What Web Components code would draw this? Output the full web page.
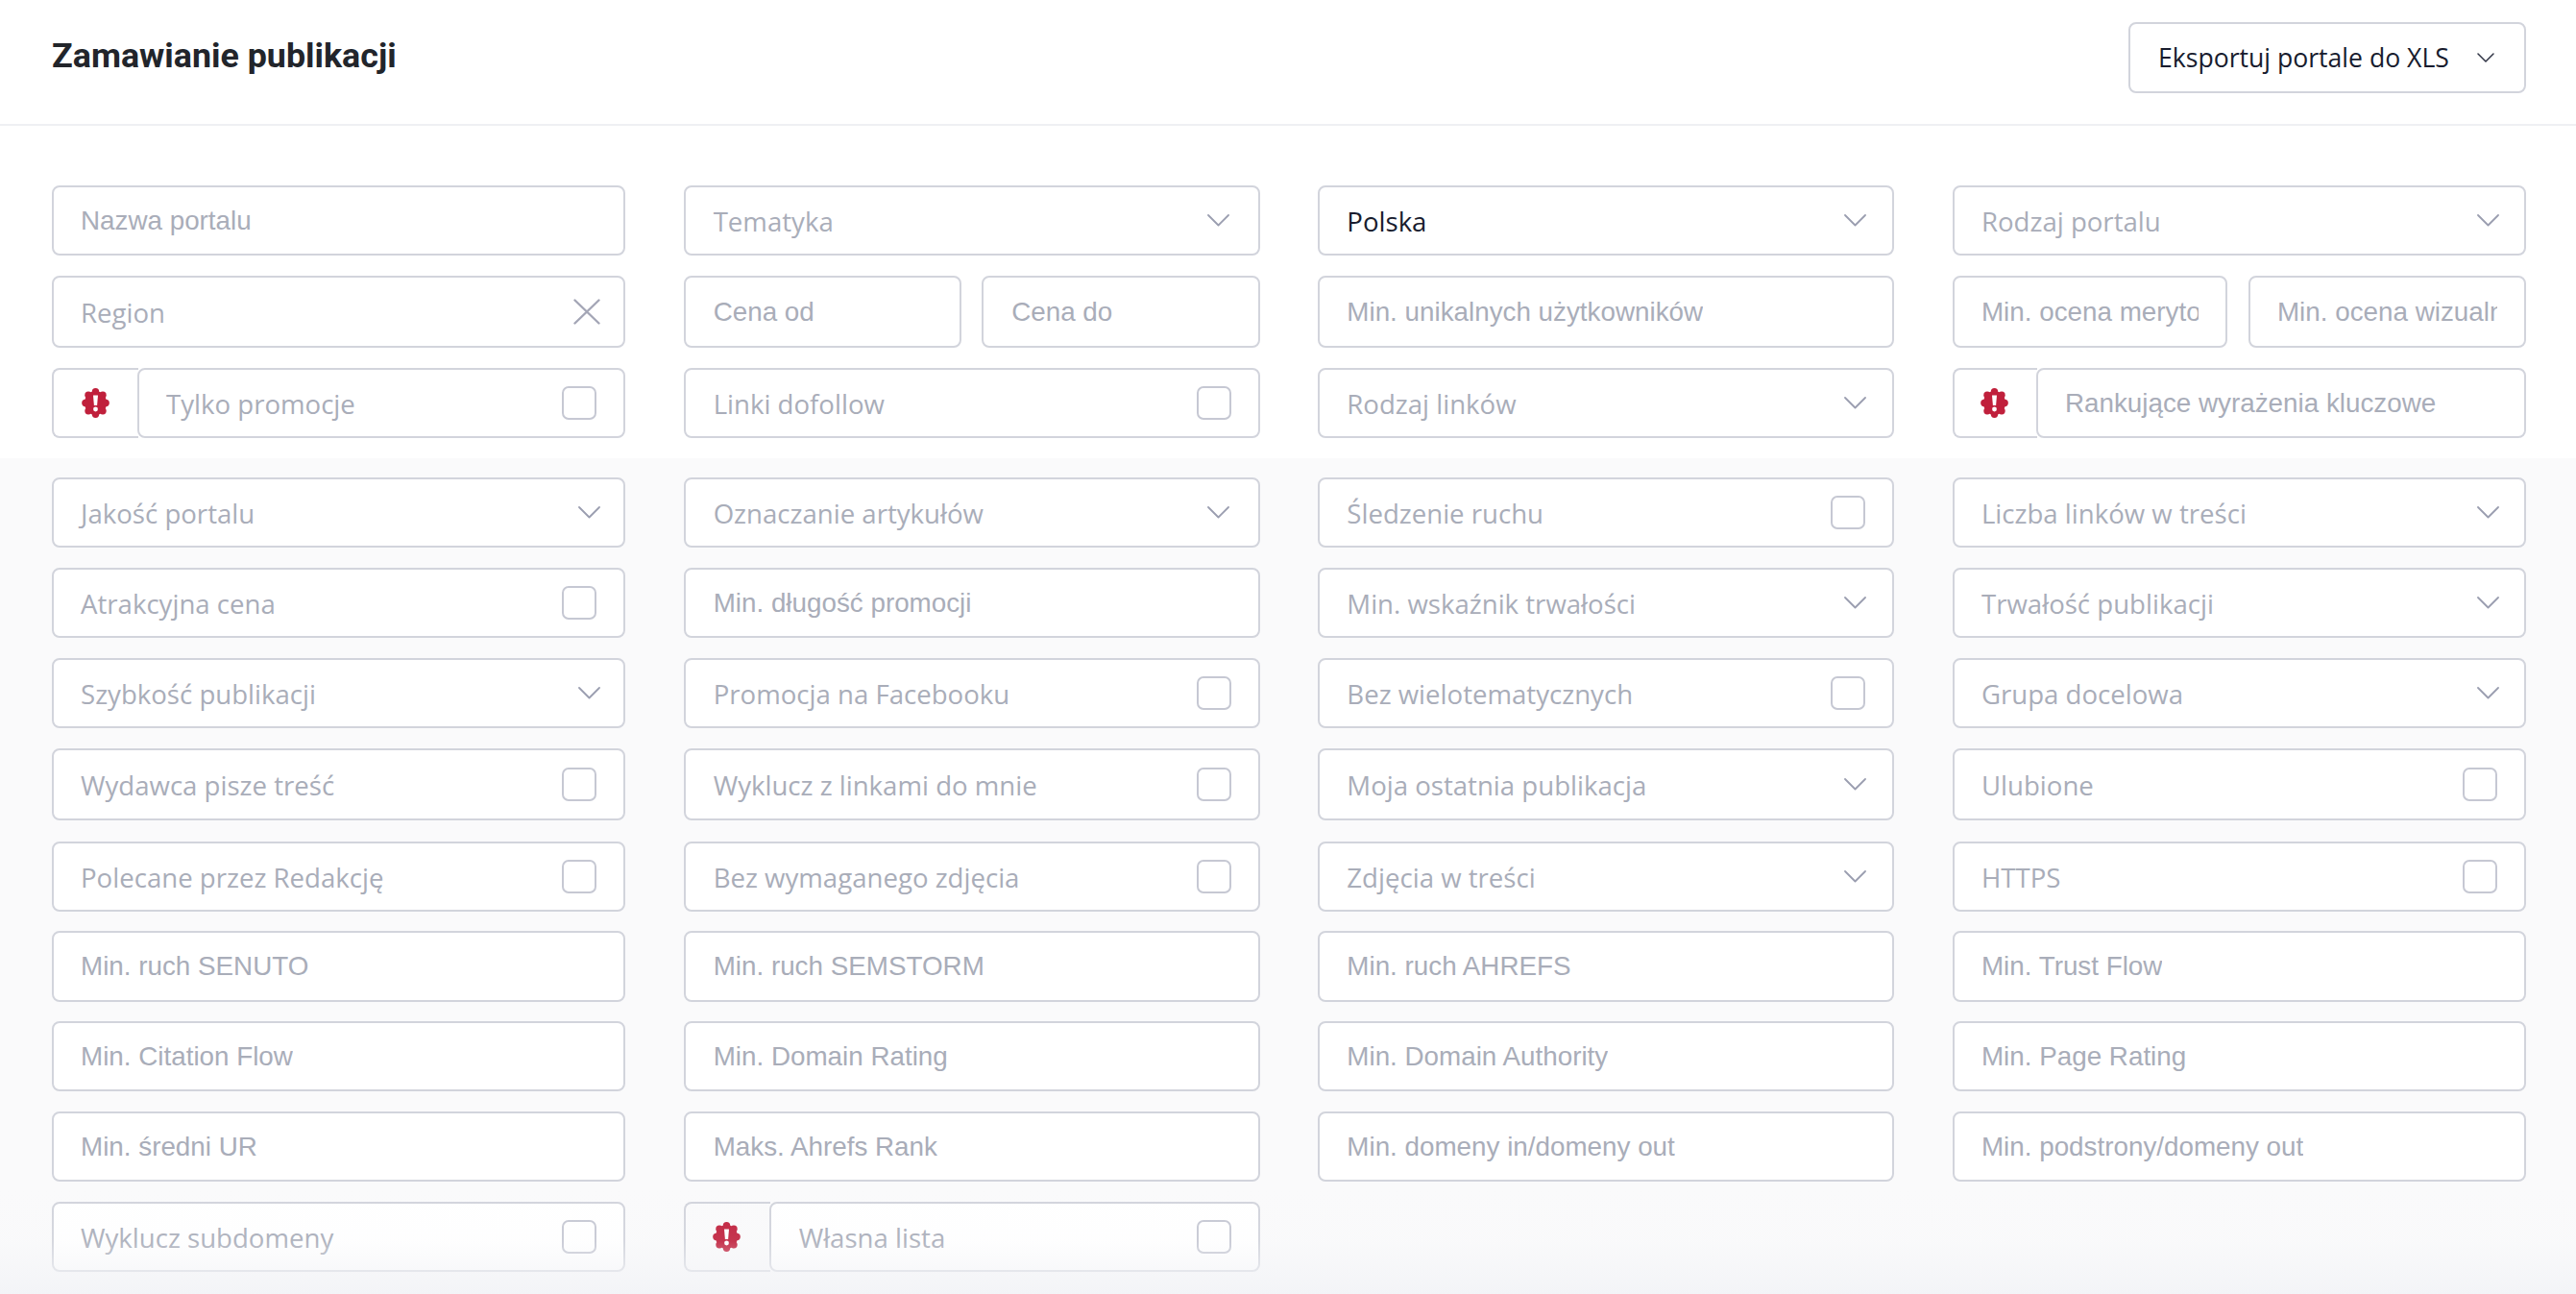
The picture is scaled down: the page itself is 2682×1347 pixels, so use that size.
<!DOCTYPE html>
<html lang="pl"><head><meta charset="utf-8"><title>Zamawianie publikacji</title>
<style>
html,body{margin:0;padding:0;background:#fff}
body{width:2682px;height:1347px;overflow:hidden;font-family:"Open Sans",sans-serif}
</style></head><body>
<order-page>
  <page-header slot="header">
    <span>Zamawianie publikacji</span>
    <export-button slot="action">Eksportuj portale do XLS</export-button>
  </page-header>
  <filter-section>
    <filter-row h="73" gap="21">
      <text-field>Nazwa portalu</text-field>
      <select-field>Tematyka</select-field>
      <select-field value>Polska</select-field>
      <select-field>Rodzaj portalu</select-field>
    </filter-row>
    <filter-row h="75" gap="21">
      <clear-field>Region</clear-field>
      <pair-field><text-field>Cena od</text-field><text-field>Cena do</text-field></pair-field>
      <text-field>Min. unikalnych użytkowników</text-field>
      <pair-field tight><text-field>Min. ocena merytoryczna</text-field><text-field>Min. ocena wizualna</text-field></pair-field>
    </filter-row>
    <filter-row h="73" gap="0">
      <addon-field><check-field>Tylko promocje</check-field></addon-field>
      <check-field>Linki dofollow</check-field>
      <select-field>Rodzaj linków</select-field>
      <addon-field narrow><text-field>Rankujące wyrażenia kluczowe</text-field></addon-field>
    </filter-row>
  </filter-section>
  <filter-section more>
    <filter-row h="73" gap="21">
      <select-field>Jakość portalu</select-field>
      <select-field>Oznaczanie artykułów</select-field>
      <check-field>Śledzenie ruchu</check-field>
      <select-field>Liczba linków w treści</select-field>
    </filter-row>
    <filter-row h="73" gap="21">
      <check-field>Atrakcyjna cena</check-field>
      <text-field>Min. długość promocji</text-field>
      <select-field>Min. wskaźnik trwałości</select-field>
      <select-field>Trwałość publikacji</select-field>
    </filter-row>
    <filter-row h="73" gap="21">
      <select-field>Szybkość publikacji</select-field>
      <check-field>Promocja na Facebooku</check-field>
      <check-field>Bez wielotematycznych</check-field>
      <select-field>Grupa docelowa</select-field>
    </filter-row>
    <filter-row h="75" gap="22">
      <check-field>Wydawca pisze treść</check-field>
      <check-field>Wyklucz z linkami do mnie</check-field>
      <select-field>Moja ostatnia publikacja</select-field>
      <check-field>Ulubione</check-field>
    </filter-row>
    <filter-row h="73" gap="20">
      <check-field>Polecane przez Redakcję</check-field>
      <check-field>Bez wymaganego zdjęcia</check-field>
      <select-field>Zdjęcia w treści</select-field>
      <check-field>HTTPS</check-field>
    </filter-row>
    <filter-row h="74" gap="20">
      <text-field>Min. ruch SENUTO</text-field>
      <text-field>Min. ruch SEMSTORM</text-field>
      <text-field>Min. ruch AHREFS</text-field>
      <text-field>Min. Trust Flow</text-field>
    </filter-row>
    <filter-row h="73" gap="21">
      <text-field>Min. Citation Flow</text-field>
      <text-field>Min. Domain Rating</text-field>
      <text-field>Min. Domain Authority</text-field>
      <text-field>Min. Page Rating</text-field>
    </filter-row>
    <filter-row h="73" gap="21">
      <text-field>Min. średni UR</text-field>
      <text-field>Maks. Ahrefs Rank</text-field>
      <text-field>Min. domeny in/domeny out</text-field>
      <text-field>Min. podstrony/domeny out</text-field>
    </filter-row>
    <filter-row h="73" gap="0">
      <check-field>Wyklucz subdomeny</check-field>
      <addon-field><check-field>Własna lista</check-field></addon-field>
    </filter-row>
  </filter-section>
</order-page>
<script>
const BOX=`:host{display:block;min-width:0;box-sizing:border-box;height:100%;background:#fff;border:2px solid #d2d4dc;border-radius:8px;color:#a9adb9;font-size:27.6px}
.in{display:flex;align-items:center;justify-content:space-between;height:100%;padding:0 28px 0 calc(28px + var(--text-shift,0px));box-sizing:border-box;white-space:nowrap}
.t{display:block;min-width:0;overflow:hidden}
svg{display:block;flex:none}`;
const OS=`font-family:"Open Sans",sans-serif;`;
function def(name,css,html,init){
  customElements.define(name,class extends HTMLElement{
    constructor(){super();const r=this.attachShadow({mode:'open'});r.innerHTML=`<style>${css}</style>${html}`;}
    connectedCallback(){init&&init(this);}
  });
}
const CHEV=`<svg width="23" height="13" viewBox="0 0 23 13" fill="none" stroke="#9b9eb0" stroke-width="1.8" stroke-linecap="round" stroke-linejoin="round"><path d="M1 1l10.5 10.5L22 1"/></svg>`;
def('order-page',`:host{display:block;width:2682px;height:1347px;position:relative;overflow:hidden;background:#fff}
.fade{position:absolute;left:0;right:0;bottom:0;height:110px;pointer-events:none;background:linear-gradient(to bottom,rgba(243,244,247,0),rgba(243,244,247,.1) 50%,rgba(243,244,247,.58) 78%,rgba(243,244,247,1) 100%)}`,
`<slot name="header"></slot><slot></slot><div class="fade"></div>`);
def('page-header',`:host{display:flex;align-items:center;justify-content:space-between;box-sizing:border-box;height:131px;padding:0 52px 14px 54px;border-bottom:2px solid #eff0f3;color:#22252b;font:700 35.8px Roboto,sans-serif}`,
`<slot></slot><slot name="action"></slot>`);
def('export-button',`:host{display:block;box-sizing:border-box;height:74px;width:414px;margin-top:5px;border:2px solid #d2d4dc;border-radius:8px;background:#fff;color:#181c2e;font:400 26.6px "Open Sans",sans-serif}
.in{display:flex;align-items:center;height:100%;padding:0 31px 0 29px;justify-content:space-between}
svg{display:block;flex:none}`,
`<div class="in"><span><slot></slot></span><svg width="18" height="11" viewBox="0 0 18 11" fill="none" stroke="#2f3344" stroke-width="1.5" stroke-linecap="round" stroke-linejoin="round"><path d="M1 1l8 8 8-8"/></svg></div>`);
def('filter-section',`:host{display:block;padding:62px 0 0 54px;width:2630px;box-sizing:border-box;height:346px}
:host([more]){width:auto;padding-right:52px;background:#fafafb;padding-top:20px;height:870px}`,`<slot></slot>`);
def('filter-row',`:host{display:grid;grid-template-columns:597px 600px 600px 597px;justify-content:space-between;height:var(--h);margin-bottom:var(--g)}
::slotted(:nth-child(1)){--chev-r:24px}
::slotted(:nth-child(2)){--chev-r:30px;--text-shift:1px}
::slotted(:nth-child(3)){--chev-r:27px}
::slotted(:nth-child(4)){--chev-r:26px}`,`<slot></slot>`,
 el=>{el.style.setProperty('--h',el.getAttribute('h')+'px');el.style.setProperty('--g',el.getAttribute('gap')+'px');});
def('text-field',BOX+`:host{font-family:"Liberation Sans",Arial,sans-serif;font-size:27.8px}`,`<div class="in"><span class="t"><slot></slot></span></div>`);
def('select-field',BOX+`:host{${OS}}:host([value]){color:#181c2e}.in{padding-right:var(--chev-r,26px)}`,`<div class="in"><span><slot></slot></span>${CHEV}</div>`);
def('check-field',BOX+`:host{${OS}}i{display:block;box-sizing:border-box;width:36px;height:35px;border:2px solid #c6c8d3;border-radius:7px;background:#fff}`,`<div class="in"><span><slot></slot></span><i></i></div>`);
def('clear-field',BOX+`:host{${OS}}.in{padding-right:24px}`,`<div class="in"><span><slot></slot></span><svg width="28" height="27" viewBox="0 0 28 27" fill="none" stroke="#a4a6b6" stroke-width="2.4" stroke-linecap="round"><path d="M1.5 1.5l25 24M26.5 1.5l-25 24"/></svg></div>`);
def('pair-field',`:host{display:grid;grid-template-columns:1fr 1fr;column-gap:21px;height:100%;min-width:0}
:host([tight]){grid-template-columns:286px 289px;column-gap:22px}`,`<slot></slot>`);
const LOBES=[...Array(8)].map((_,i)=>{const a=i*Math.PI/4-Math.PI/2;return `<circle cx="${(14.5+10.6*Math.cos(a)).toFixed(2)}" cy="${(15.5+11.8*Math.sin(a)).toFixed(2)}" r="3.7"/>`}).join('');
def('addon-field',`:host{display:grid;grid-template-columns:90px 1fr;height:100%;min-width:0}
:host([narrow]){grid-template-columns:88px 1fr}
.ic{box-sizing:border-box;display:flex;align-items:center;justify-content:center;border:2px solid #d2d4dc;border-right:0;border-radius:8px 0 0 8px;padding-right:2px}
::slotted(*){margin-left:-1px}svg{display:block}`,
`<div class="ic"><svg width="29" height="31" viewBox="0 0 29 31"><g fill="#c0203c"><ellipse cx="14.5" cy="15.5" rx="11.5" ry="12.5"/>${LOBES}</g><path d="M12 7.5h5l-.9 10.5h-3.2z" fill="#fff"/><circle cx="14.5" cy="22" r="2.4" fill="#fff"/></svg></div><slot></slot>`);
</script>
</body></html>
